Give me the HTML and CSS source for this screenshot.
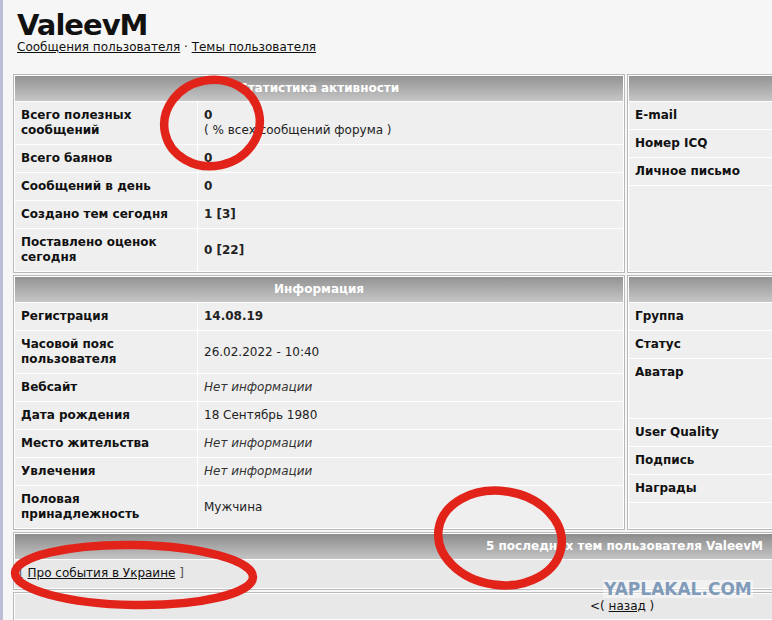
FILE: index.html
```html
<!DOCTYPE html>
<html lang="ru">
<head>
  <meta charset="UTF-8" />
  <title>ValeevM - профиль</title>
  <link rel="stylesheet" href="styles.css">
</head>
<body>
  <div class="page">
    <div class="head">
      <h1>ValeevM</h1>
      <div class="userlinks"><a href="#">Сообщения пользователя</a> · <a href="#">Темы пользователя</a></div>
    </div>

    <div class="profile">
      <!-- статистика -->
      <div class="panel">
        <div class="cap">Статистика активности</div>
        <div class="row"><div class="lbl">Всего полезных сообщений</div><div class="val"><b>0</b><br>( % всех сообщений форума )</div></div>
        <div class="row"><div class="lbl">Всего баянов</div><div class="val"><b>0</b></div></div>
        <div class="row"><div class="lbl">Сообщений в день</div><div class="val"><b>0</b></div></div>
        <div class="row"><div class="lbl">Создано тем сегодня</div><div class="val mid"><b>1 [3]</b></div></div>
        <div class="row"><div class="lbl">Поставлено оценок сегодня</div><div class="val mid"><b>0 [22]</b></div></div>
      </div>
      <div class="panel side">
        <div class="cap">&nbsp;</div>
        <div class="lbl">E-mail</div>
        <div class="lbl">Номер ICQ</div>
        <div class="lbl">Личное письмо</div>
        <div class="fill"></div>
      </div>

      <!-- информация -->
      <div class="panel">
        <div class="cap">Информация</div>
        <div class="row"><div class="lbl">Регистрация</div><div class="val"><b>14.08.19</b></div></div>
        <div class="row"><div class="lbl">Часовой пояс пользователя</div><div class="val mid">26.02.2022 - 10:40</div></div>
        <div class="row"><div class="lbl">Вебсайт</div><div class="val"><i>Нет информации</i></div></div>
        <div class="row"><div class="lbl">Дата рождения</div><div class="val">18 Сентябрь 1980</div></div>
        <div class="row"><div class="lbl">Место жительства</div><div class="val"><i>Нет информации</i></div></div>
        <div class="row"><div class="lbl">Увлечения</div><div class="val"><i>Нет информации</i></div></div>
        <div class="row"><div class="lbl">Половая принадлежность</div><div class="val mid">Мужчина</div></div>
      </div>
      <div class="panel side">
        <div class="cap">&nbsp;</div>
        <div class="lbl">Группа</div>
        <div class="lbl">Статус</div>
        <div class="lbl avatar">Аватар</div>
        <div class="lbl">User Quality</div>
        <div class="lbl">Подпись</div>
        <div class="lbl">Награды</div>
        <div class="fill"></div>
      </div>
    </div>

    <div class="panel topics">
      <div class="cap">5 последних тем пользователя ValeevM</div>
      <div class="topic">[ <a href="#">Про события в Украине</a> ]</div>
    </div>

    <div class="panel nav">
      <div class="back">&lt;( <a href="#">назад</a> )</div>
    </div>
  </div>

  <div class="wm">YAPLAKAL.COM</div>

  <!-- пометки поверх страницы -->
  <svg class="marks" width="772" height="620" viewBox="0 0 772 620">
    <ellipse cx="212" cy="123" rx="48" ry="43" transform="rotate(-12 212 123)" />
    <ellipse cx="500" cy="538" rx="62" ry="47" transform="rotate(8 500 538)" />
    <ellipse cx="134" cy="575" rx="119" ry="30" transform="rotate(1 134 575)" />
  </svg>
</body>
</html>
```

FILE: styles.css
```css
* {
  box-sizing: border-box;
}
body {
  margin: 0;
  background: #f6f6f6;
  border-left: 3px solid #bdbdd6;
  font-family: "DejaVu Sans", Verdana, sans-serif;
  font-size: 12px;
  line-height: 15px;
  color: #111;
  overflow: hidden;
  height: 620px;
}
a {
  color: #111;
}
.page {
  width: 772px;
  padding: 10px 0 0 10px;
}
.head {
  padding-left: 4px;
}
h1 {
  margin: 0;
  font-size: 29px;
  line-height: 30px;
  letter-spacing: -1px;
}
.userlinks {
  margin-bottom: 19px;
}
.profile {
  display: grid;
  grid-template-columns: 612px 150px;
  gap: 2px;
}
.panel {
  display: flex;
  flex-direction: column;
  gap: 1px;
  padding: 1px;
  background: #fff;
  border: 1px solid #b9b9b9;
}
.cap {
  padding: 5px 6px;
  text-align: center;
  font-weight: bold;
  color: #fff;
  background: linear-gradient(#939393, #c6c6c6);
}
.row {
  display: grid;
  grid-template-columns: 182px 1fr;
  gap: 1px;
}
.lbl, .val, .fill {
  background: #efefef;
  padding: 6px;
}
.lbl {
  font-weight: bold;
}
.val {
  color: #222;
}
.val i {
  color: #333;
}
.mid {
  display: flex;
  align-items: center;
}
.side .lbl {
  padding-left: 6px;
}
.avatar {
  height: 59px;
}
.fill {
  flex: 1;
}
.topics {
  margin-top: 2px;
}
.topics .cap {
  text-align: right;
  padding-right: 10px;
  background: linear-gradient(#8c8c8c, #c4c4c4);
}
.topic {
  background: #e8e8e8;
  padding: 6px 4px 7px;
  color: #555;
}
.topic a {
  color: #111;
}
.nav {
  margin-top: 2px;
}
.back {
  background: #e8e8e8;
  padding: 5px 6px 5px 575px;
}
.wm {
  position: absolute;
  left: 603px;
  top: 580px;
  width: 150px;
  padding: 0 1px;
  font-size: 17px;
  line-height: 18px;
  font-weight: bold;
  color: #7f9bb9;
  background: rgba(255, 255, 255, 0.45);
  white-space: nowrap;
  overflow: hidden;
}
.marks {
  position: absolute;
  left: 0;
  top: 0;
  pointer-events: none;
}
.marks ellipse {
  fill: none;
  stroke: #e2231a;
  stroke-width: 8.5;
}
```
